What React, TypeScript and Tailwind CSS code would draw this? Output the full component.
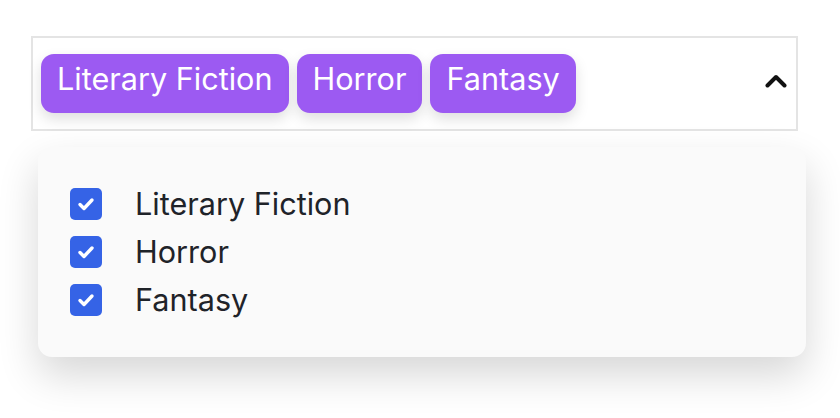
import { useState } from "react";

const genres = ["Literary Fiction", "Horror", "Fantasy"];

function Check() {
  return (
    <span className="flex h-[32px] w-[32px] shrink-0 items-center justify-center rounded-[5px] bg-[#3563e6]">
      <svg width="18" height="14" viewBox="0 0 18 14" fill="none">
        <path d="M3 7.5l4 4 8-8.5" stroke="white" strokeWidth="3.4" strokeLinecap="round" strokeLinejoin="round" />
      </svg>
    </span>
  );
}

export default function App() {
  const [selected] = useState(genres);

  return (
    <div className="min-h-screen bg-white pl-[31px] pt-[36px] font-['Inter',sans-serif]">
      <div className="flex w-[767px] items-center justify-between border-2 border-[#e4e4e4] bg-white py-[16px] pl-[8px] pr-[9px]">
        <div className="flex gap-[8px]">
          {selected.map((g) => (
            <span
              key={g}
              className="flex h-[59px] items-center rounded-[13px] bg-[#9c5af2] px-[16px] pb-[10px] text-[30.6px] text-white shadow-[0_6px_14px_rgba(0,0,0,0.13)]"
            >
              {g}
            </span>
          ))}
        </div>
        <svg width="22" height="14" viewBox="0 0 22 14" fill="none" className="mb-[6px]">
          <path d="M2.5 11.5L11 3l8.5 8.5" stroke="#111" strokeWidth="4" strokeLinecap="round" strokeLinejoin="round" />
        </svg>
      </div>

      <div className="ml-[7px] mt-[16px] w-[768px] rounded-[14px] bg-[#fafafa] px-[32px] pb-[33px] pt-[33px] shadow-[0_18px_40px_rgba(0,0,0,0.16)]">
        {selected.map((g) => (
          <div key={g} className="flex h-[48px] items-center gap-[33px]">
            <Check />
            <span className="text-[30.6px] text-[#1f2329]">{g}</span>
          </div>
        ))}
      </div>
    </div>
  );
}
